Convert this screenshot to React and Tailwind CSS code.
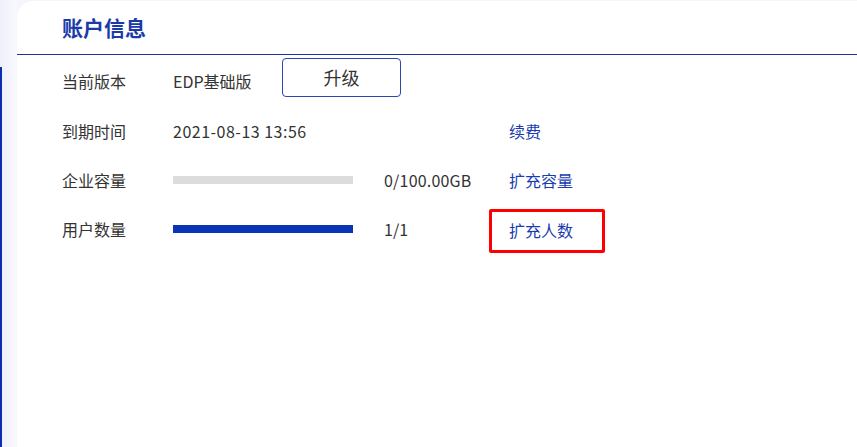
export default function App() {
  const font = { fontFamily: '"Noto Sans CJK SC", "Noto Sans", sans-serif' };
  return (
    <div className="flex w-[857px] h-[447px] bg-[#f5f5fd] overflow-hidden" style={font}>
      <div className="flex flex-col w-[17px] bg-gradient-to-r from-[#f0f0fb] to-[#f8f8fe]">
        <div className="h-[67px]" />
        <div className="w-[2px] flex-1 bg-[#0b2fb0]" />
      </div>
      <div className="flex-1 bg-white rounded-tl-[16px] mt-[1px] flex flex-col">
        <div className="h-[54px] border-b border-[#1c3596] pl-[45px] flex items-center">
          <span className="text-[21px] font-bold text-[#1b3aa8] leading-none">账户信息</span>
        </div>
        <div className="pl-[45px] text-[16px] text-[#333333] leading-none">
          <div className="flex items-center h-[51px]">
            <span className="w-[111px]">当前版本</span>
            <span className="w-[109px]">EDP基础版</span>
            <button className="w-[119px] h-[39px] mb-[7px] border border-[#2a46b0] rounded-[4px] text-[18px] text-[#333333] bg-white leading-none">升级</button>
          </div>
          <div className="flex items-center h-[49px]">
            <span className="w-[111px]">到期时间</span>
            <span className="w-[336px] tracking-[0.5px]">2021-08-13 13:56</span>
            <span className="text-[#1a3cb0]">续费</span>
          </div>
          <div className="flex items-center h-[50px]">
            <span className="w-[111px]">企业容量</span>
            <div className="w-[180px] h-[8px] bg-[#dcdcdc]" />
            <span className="w-[125px] ml-[31px] tracking-[0.2px]">0/100.00GB</span>
            <span className="text-[#1a3cb0]">扩充容量</span>
          </div>
          <div className="flex items-center h-[48px]">
            <span className="w-[111px]">用户数量</span>
            <div className="w-[180px] h-[8px] bg-[#0b33b5]" />
            <span className="w-[105px] ml-[31px]">1/1</span>
            <div className="w-[116px] h-[44px] mt-[4px] border-[3px] border-[#ff0000] rounded-[2px] pl-[17px] pb-[2px] flex items-center">
              <span className="text-[#1a3cb0]">扩充人数</span>
            </div>
          </div>
        </div>
      </div>
    </div>
  );
}
